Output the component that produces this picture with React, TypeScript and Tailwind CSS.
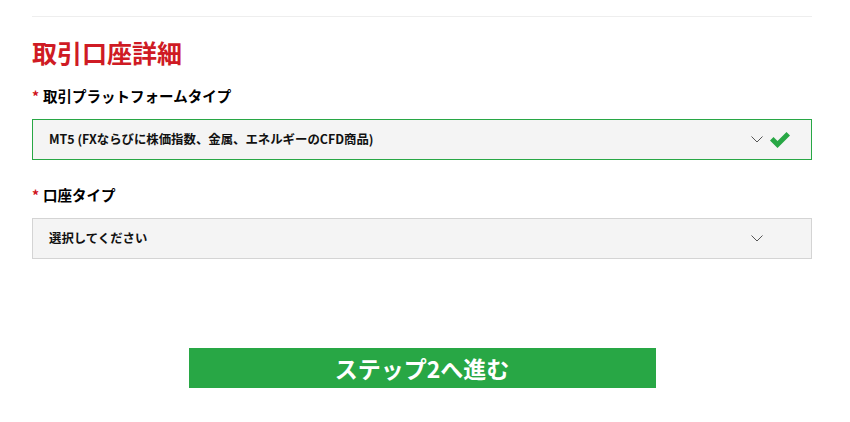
const font = { fontFamily: '"Noto Sans CJK JP", "Liberation Sans", sans-serif' }

function Chevron() {
  return (
    <svg width="12" height="7" viewBox="0 0 12 7" fill="none" className="shrink-0">
      <path d="M0.5 0.5 L6 6 L11.5 0.5" stroke="#555" strokeWidth="1" />
    </svg>
  )
}

function Check() {
  return (
    <svg width="22" height="18" viewBox="0 0 22 18" className="shrink-0">
      <path d="M1 9.5 L4.5 6 L8.5 10 L17.5 1 L21 4.5 L8.5 17 Z" fill="#28a745" />
    </svg>
  )
}

function Field({ label, value, valid }: { label: string; value: string; valid?: boolean }) {
  return (
    <div>
      <div className="flex items-center h-[20px] text-[14.5px] font-bold text-black leading-none">
        <span className="text-[#d0121b] mr-[4px] text-[14px]">*</span>
        {label}
      </div>
      <div
        className={`mt-[13px] h-[41px] flex items-center pl-[16px] pr-[20px] bg-[#f4f4f4] border ${
          valid ? 'border-[#28a745]' : 'border-[#d4d4d4]'
        }`}
      >
        <span className="flex-1 text-[12.4px] font-bold text-[#111]">{value}</span>
        <Chevron />
        <span className={`ml-[6px] ${valid ? '' : 'invisible'}`}>
          <Check />
        </span>
      </div>
    </div>
  )
}

export default function App() {
  return (
    <div style={font} className="w-[850px] h-[422px] bg-white">
      <div className="w-[780px] ml-[32px] pt-[16px]">
        <div className="h-[1px] bg-[#eeeeee]" />
        <h2 className="mt-[21px] text-[25px] font-bold text-[#cf1b24] leading-[28px]">取引口座詳細</h2>
        <div className="mt-[20px] space-y-[25px]">
          <Field label="取引プラットフォームタイプ" value="MT5 (FXならびに株価指数、金属、エネルギーのCFD商品)" valid />
          <Field label="口座タイプ" value="選択してください" />
        </div>
        <div className="mt-[89px] flex justify-center">
          <button className="w-[467px] h-[40px] bg-[#28a745] text-white text-[23px] font-bold leading-none">
            ステップ2へ進む
          </button>
        </div>
      </div>
    </div>
  )
}
